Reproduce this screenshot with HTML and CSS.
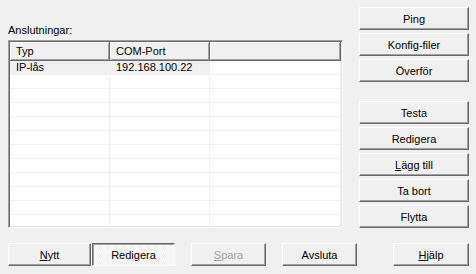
FILE: index.html
```html
<!DOCTYPE html>
<html lang="sv">

<head>
    <meta charset="UTF-8">
    <title>Anslutningar</title>
    <link rel="stylesheet" href="styles.css">
</head>

<body>

    <div class="dialog">
        <div class="main">
            <!-- Left: connection list -->
            <div class="left">
                <div class="caption">Anslutningar:</div>
                <div class="listview">
                    <table class="grid">
                        <thead>
                            <tr>
                                <th class="col1">Typ</th>
                                <th class="col2">COM-Port</th>
                                <th class="col3"></th>
                            </tr>
                        </thead>
                        <tbody>
                            <tr class="selected">
                                <td>IP-lås</td>
                                <td>192.168.100.22</td>
                                <td class="plain"></td>
                            </tr>
                            <tr><td></td><td></td><td></td></tr>
                            <tr><td></td><td></td><td></td></tr>
                            <tr><td></td><td></td><td></td></tr>
                            <tr><td></td><td></td><td></td></tr>
                            <tr><td></td><td></td><td></td></tr>
                            <tr><td></td><td></td><td></td></tr>
                            <tr><td></td><td></td><td></td></tr>
                            <tr><td></td><td></td><td></td></tr>
                            <tr><td></td><td></td><td></td></tr>
                            <tr><td></td><td></td><td></td></tr>
                            <tr><td></td><td></td><td></td></tr>
                        </tbody>
                    </table>
                </div>
            </div>

            <!-- Right: action buttons -->
            <div class="side">
                <div class="btn-group">
                    <button class="btn">Ping</button>
                    <button class="btn">Konfig-filer</button>
                    <button class="btn">Överför</button>
                </div>
                <div class="btn-group">
                    <button class="btn">Testa</button>
                    <button class="btn">Redigera</button>
                    <button class="btn"><u>L</u>ägg till</button>
                    <button class="btn">Ta bort</button>
                    <button class="btn">Flytta</button>
                </div>
            </div>
        </div>

        <!-- Bottom row -->
        <div class="bottom">
            <div class="pair">
                <button class="btn wide"><u>N</u>ytt</button>
                <button class="btn wide pushed">Redigera</button>
            </div>
            <button class="btn small" disabled><u>S</u>para</button>
            <button class="btn small">Avsluta</button>
            <button class="btn help"><u>H</u>jälp</button>
        </div>
    </div>

</body>

</html>
```

FILE: styles.css
```css
body {
    margin: 0;
    background: #f0f0f0;
    font-family: 'Liberation Sans', Arial, sans-serif;
    font-size: 11px;
    color: #000;
}

.dialog {
    width: 476px;
    height: 274px;
    padding: 7px 7px 0 8px;
    box-sizing: border-box;
}

.main {
    display: flex;
    gap: 16px;
}

.left {
    width: 335px;
    padding-top: 17px;
}

.caption {
    height: 16px;
}

/* Sunken list view */
.listview {
    height: 184px;
    border: 1px solid;
    border-color: #a0a0a0 #fff #fff #a0a0a0;
    box-shadow: inset 1px 1px #696969, inset -1px -1px #e3e3e3;
    background: #fff;
    padding: 1px;
    overflow: hidden;
}

.grid {
    border-collapse: collapse;
    table-layout: fixed;
    width: 100%;
}

.grid th {
    height: 18px;
    padding: 0 0 0 6px;
    text-align: left;
    font-weight: normal;
    background: #f0f0f0;
    border-right: 1px solid #696969;
    border-bottom: 1px solid #696969;
    box-shadow: inset 1px 1px #fff, inset -1px -1px #a0a0a0;
}

.grid .col1,
.grid .col2 {
    width: 93px;
}

.grid td {
    height: 13px;
    padding: 0 0 0 6px;
    border-right: 1px solid #f0f0f0;
    border-bottom: 1px solid #f0f0f0;
    line-height: 13px;
    white-space: nowrap;
}

.grid tr.selected td {
    background: #f0f0f0;
}

.grid tr.selected td.plain {
    background: #fff;
}

/* Right button column */
.side {
    display: flex;
    flex-direction: column;
    gap: 19px;
    width: 110px;
}

.btn-group {
    display: flex;
    flex-direction: column;
    gap: 3px;
}

/* Classic raised button */
.btn {
    height: 23px;
    padding: 0;
    margin: 0;
    font: inherit;
    color: #000;
    background: #f0f0f0;
    border: 1px solid;
    border-color: #fff #696969 #696969 #fff;
    box-shadow: inset -1px -1px #a0a0a0;
    text-align: center;
}

.btn u {
    text-decoration: underline;
}

.btn:disabled {
    color: #a0a0a0;
}

.btn.pushed {
    border-color: #696969 #fff #fff #696969;
    box-shadow: inset 1px 1px #a0a0a0;
    background: repeating-conic-gradient(#fff 0 25%, #ececec 0 50%) 0 0 / 2px 2px;
}

/* Bottom row */
.bottom {
    display: flex;
    align-items: center;
    gap: 16px;
    margin-top: 15px;
}

.pair {
    display: flex;
    gap: 1px;
}

.wide {
    width: 83px;
}

.small {
    width: 75px;
}

.help {
    width: 76px;
    margin-left: 20px;
}
```
